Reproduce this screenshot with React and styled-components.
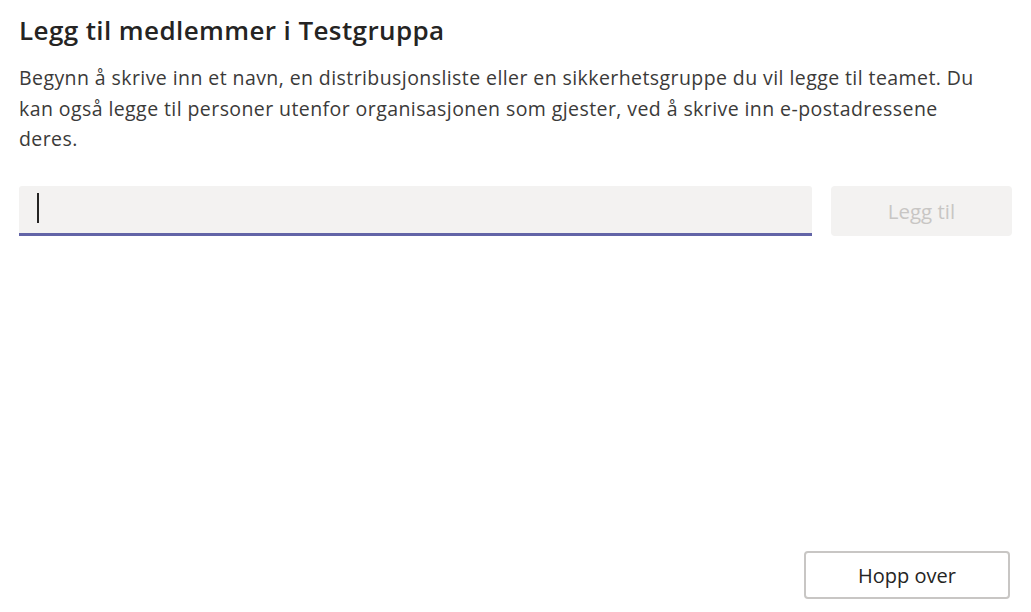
import React from 'react'
import styled, { createGlobalStyle } from 'styled-components'

const GlobalStyle = createGlobalStyle`
  html, body, #root {
    margin: 0;
    height: 100%;
  }
  body {
    background: #fff;
    font-family: "Open Sans", "Noto Sans", Arial, sans-serif;
    color: #252423;
  }
`

const App = () => {
  return (
    <>
      <GlobalStyle />
      <Page>
        <Title>Legg til medlemmer i Testgruppa</Title>
        <Description>
          Begynn å skrive inn et navn, en distribusjonsliste eller en sikkerhetsgruppe du vil legge til teamet. Du
          <br />
          kan også legge til personer utenfor organisasjonen som gjester, ved å skrive inn e-postadressene
          <br />
          deres.
        </Description>

        <InputRow>
          <Field>
            <Caret />
            <TextInput type="text" aria-label="Navn eller e-postadresse" />
          </Field>
          <AddButton disabled>Legg til</AddButton>
        </InputRow>

        <Footer>
          <SkipButton>Hopp over</SkipButton>
        </Footer>
      </Page>
    </>
  )
}

export default App

const Page = styled.div`
  height: 100%;
  box-sizing: border-box;
  padding: 14px 19px 13px 19px;
  display: flex;
  flex-direction: column;
`

const Title = styled.h1`
  margin: 0;
  font-size: 26px;
  font-weight: 600;
  line-height: 32px;
  color: #252423;
  letter-spacing: 0.4px;
`

const Description = styled.p`
  margin: 17px 0 0 0;
  font-size: 19.5px;
  line-height: 30.5px;
  letter-spacing: 0.42px;
  color: #3b3a39;
  white-space: nowrap;
`

const InputRow = styled.div`
  margin-top: 31px;
  display: flex;
  gap: 19px;
  align-items: stretch;
`

const Field = styled.div`
  position: relative;
  flex: 1;
  height: 50px;
  box-sizing: border-box;
  background: #f3f2f1;
  border-radius: 3px 3px 0 0;
  border-bottom: 3px solid #6264a7;
`

const Caret = styled.span`
  position: absolute;
  left: 18px;
  top: 7px;
  width: 2px;
  height: 30px;
  background: #252423;
`

const TextInput = styled.input`
  width: 100%;
  height: 100%;
  box-sizing: border-box;
  border: none;
  outline: none;
  background: transparent;
  padding: 0 18px;
  font: inherit;
  font-size: 19px;
  caret-color: transparent;
`

const AddButton = styled.button`
  width: 181px;
  height: 50px;
  border: none;
  border-radius: 4px;
  background: #f3f2f1;
  color: #c8c6c4;
  font-family: inherit;
  font-size: 20.5px;
  font-weight: 400;
  cursor: default;
`

const Footer = styled.div`
  margin-top: auto;
  display: flex;
  justify-content: flex-end;
  padding-right: 2px;
`

const SkipButton = styled.button`
  width: 206px;
  height: 48px;
  box-sizing: border-box;
  border: 2px solid #c8c6c4;
  border-radius: 4px;
  background: #fff;
  color: #252423;
  font-family: inherit;
  font-size: 20px;
  cursor: pointer;
`
